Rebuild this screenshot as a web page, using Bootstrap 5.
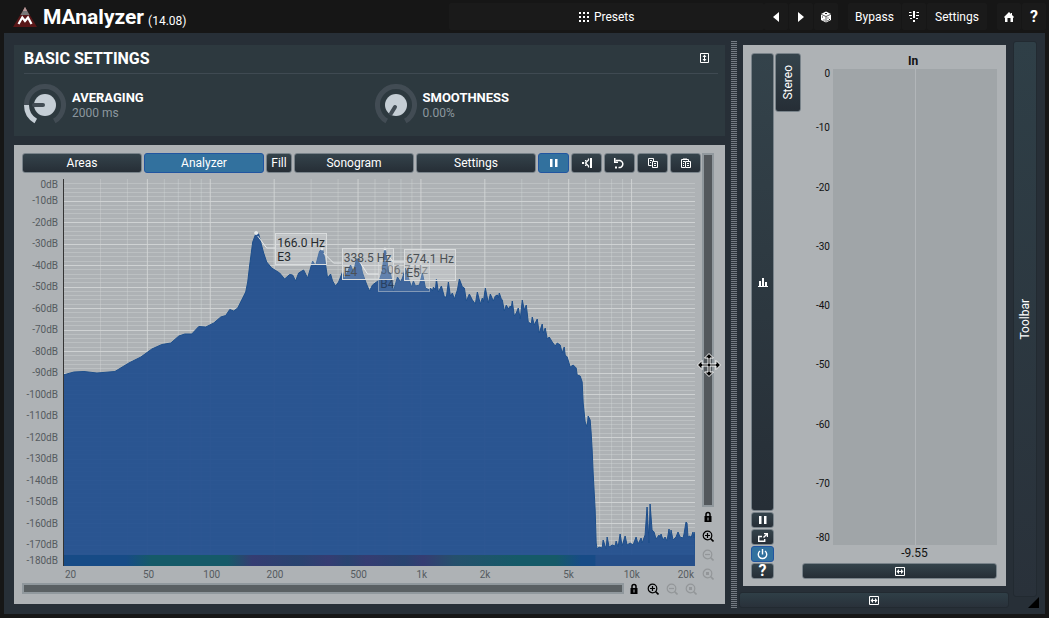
<!DOCTYPE html>
<html lang="en">
<head>
<meta charset="utf-8">
<meta name="viewport" content="width=device-width, initial-scale=1">
<title>MAnalyzer</title>
<link href="https://cdn.jsdelivr.net/npm/bootstrap@5.3.0/dist/css/bootstrap.min.css" rel="stylesheet">
<style>
  body { background:#161616; color:#fff; font-family:Roboto,"Liberation Sans",sans-serif; font-size:12px; line-height:16px; }
  button { font:inherit; color:inherit; border:0; padding:0; }
  svg { display:block; flex:none; }
  h1 { font-size:21px; line-height:32px; font-weight:700; margin-left:6px; }
  h2 { font-size:16px; line-height:20px; font-weight:700; }
  .topbar { height:33px; padding-right:3px; }
  .topbar button { background:#1a1a1a; height:27px; border-radius:2px; min-width:24px; display:flex; align-items:center; justify-content:center; }
  .btngroup { gap:1px; }
  .btngroup + .btngroup { margin-left:10px; }
  .version { font-size:12px; }
  .brandside { flex:444 1 0; padding-left:13px; }
  .presets { flex:320 1 0; gap:5px; }
  .w-bypass { width:53px; } .w-settings { width:60px; }
  .shell { background:#272f37; margin:0 4px 4px; padding:8px 0 6px 10px; }
  .leftside { min-width:0; padding:4px 0; gap:9px; }
  .basic { background:#2d393f; height:91px; padding:4px 0 0 10px; }
  .basic header { height:25px; border-bottom:1px solid #3f4a52; margin-right:7px; padding-right:9px; }
  .knobs { padding-top:10px; }
  .knob { padding-top:6px; padding-left:6px; }
  .knobname { font-size:13px; font-weight:700; line-height:16px; }
  .knobvalue { color:#8c979e; line-height:15px; }
  .splitter { width:6px; margin:0 2px 0 6px; background:repeating-linear-gradient(#747b83 0 1px,#2d343c 1px 2px); }
  .silver { background:#aeb2b5; color:#111; }
  .analyzer { padding:8px 10px 10px 8px; }
  .keys { gap:2px; margin-bottom:6px; }
  .key { background:linear-gradient(#34434b,#262e36); color:#fff; border:1px solid #79838a; border-radius:3px; height:20px; display:flex; align-items:center; justify-content:center; min-width:0; }
  .key.on { background:#32719e; border:1px solid #2155a0; }
  .key.wide { flex:1 1 0; }
  .key.fill { width:26px; }
  .key.tool { width:31px; }
  .yaxis { width:41px; padding-right:5px; color:#555b60; font-size:10px; line-height:11px; text-align:right; }
  .yaxis div { flex:2 1 0; min-height:0; display:flex; align-items:center; justify-content:flex-end; }
  .yaxis div:first-child, .yaxis div:last-child { flex-grow:1; }
  .plot { min-width:0; min-height:300px; margin-right:6px; position:relative; }
  .plot > svg { position:absolute; inset:0; width:100%; height:100%; }
  .xaxis { margin-left:41px; margin-right:6px; height:17px; font-size:10px; line-height:17px; color:#555b60; }
  .xaxis span { flex-basis:0; display:flex; justify-content:flex-end; }
  .xaxis b { width:0; display:flex; justify-content:center; font-weight:400; }
  .xaxis .edge-start b { justify-content:flex-start; padding-left:2px; }
  .xaxis .edge-end b { justify-content:flex-end; padding-right:1px; }
  .peak { position:absolute; width:8.2%; min-width:51px; height:32px; padding:2px 0 0 1px; border:1px solid #d9dcdd; background:#ffffff30; color:#252a2e; font-size:12px; line-height:14px; white-space:nowrap; }
  .peak.dim { color:#4b5054; } .peak.faint { opacity:.5; }
  .track { background:#90989d; }
  .hscroll { height:11px; padding:2px; }
  .hscroll div { height:7px; background:#5a6063; }
  .hicons { width:77px; height:11px; }
  .vside { width:12px; margin:0 1px 11px; }
  .vscroll { padding:2px; position:relative; }
  .vscroll > div { background:#53585c; height:100%; }
  .cursor { position:absolute; left:60%; top:60%; transform:translate(-50%,-50%); }
  .vicon { height:19px; display:flex; align-items:center; justify-content:center; }
  .off { opacity:.15; }
  .rightside { width:270px; padding-top:4px; gap:6px; }
  .meter { padding:8px 9px 7px 8px; margin:0 3px 0 4px; }
  .strip { width:23px; gap:1px; }
  .strip .key, .key.meterwide { height:16px; }
  .strip .key.tall { flex:1 1 auto; }
  .vtext { writing-mode:vertical-rl; transform:rotate(180deg); }
  .stereo { width:26px; height:59px; margin-left:1px; }
  .scale { width:32px; padding-right:3px; font-size:10px; line-height:10px; text-align:right; }
  .scale div { flex:2 1 0; display:flex; align-items:center; justify-content:flex-end; }
  .scale div:first-child { flex-grow:1; align-items:flex-start; }
  .scale div:last-child { flex-grow:1; align-items:flex-end; padding-bottom:2px; }
  .meterbody { background:#a0a5a8; }
  .meterbody div + div { border-left:1px solid #b2b6b9; }
  .meterhead, .meterwide { margin-left:28px; }
  .meterfoot { margin-left:58px; padding-bottom:2px; }
  .dark { background:linear-gradient(#2f3f47,#29313a); border:1px solid #222a31; border-radius:3px; }
  .widebar { height:16px; display:flex; align-items:center; justify-content:center; }
  .toolcol { width:32px; margin-left:4px; }
  .toolcol .dark { width:24px; display:flex; align-items:center; justify-content:center; }
  .corner { width:11px; height:11px; margin-right:6px; background:#000; clip-path:polygon(100% 0,100% 100%,0 100%); }
</style>
</head>
<body>
<svg width="0" height="0" class="position-absolute" aria-hidden="true">
  <defs>
    <symbol id="lock" viewBox="0 0 12 12"><path d="M4 6V3.500a2 2 0 0 1 4 0V6" fill="none" stroke="#000" stroke-width="1.500"/><path d="M2.500 5h7v6h-7z"/><path d="M6 6.500v3" stroke="#aeb2b5"/></symbol>
    <symbol id="lens" viewBox="0 0 12 12"><circle cx="5.500" cy="5.500" r="4.300" fill="none" stroke="#000" stroke-width="1.200"/><path d="M8.500 8.500 11.500 11.500" stroke="#000" stroke-width="1.600"/></symbol>
    <symbol id="zin" viewBox="0 0 12 12"><use href="#lens"/><path d="M3 5.500h5M5.500 3v5" stroke="#000" stroke-width="1.200"/></symbol>
    <symbol id="zout" viewBox="0 0 12 12"><use href="#lens"/><path d="M3 5.500h5" stroke="#000" stroke-width="1.200"/></symbol>
    <symbol id="zfit" viewBox="0 0 12 12"><use href="#lens"/><path d="M4 4h3v3H4z"/></symbol>
    <symbol id="pause" viewBox="0 0 10 10"><path d="M1 1h2.500v8H1zM6 1h2.500v8H6z" fill="#fff"/></symbol>
    <symbol id="widen" viewBox="0 0 10 9"><path d="M.5.5h9v8h-9z" fill="none" stroke="#fff"/><path d="M1.500 4.500 4 2V4h2V2l2.500 2.500L6 7V5H4v2z" fill="#fff"/></symbol>
  </defs>
</svg>
<div class="min-vh-100 d-flex flex-column">
  <header class="topbar d-flex align-items-center">
    <div class="brandside d-flex align-items-center">
      <svg width="24" height="20" viewBox="0 0 24 20"><path d="M12 0 24 20H0z" fill="#591718"/><path d="M12 0 16.500 8h-9z" fill="#777"/><path d="M12 0 14 4h-4z" fill="#b99"/><path d="M5.500 17 9.300 10.500 12 14l3-3.500 3.500 6.500" fill="none" stroke="#fff" stroke-width="2.200"/></svg>
      <h1 class="mb-0">MAnalyzer</h1><span class="version ms-1 mt-2">(14.08)</span>
    </div>
    <button class="presets" type="button"><svg width="10" height="10" fill="#fff"><path d="M0 0h2v2H0zM4 0h2v2H4zM8 0h2v2H8zM0 4h2v2H0zM4 4h2v2H4zM8 4h2v2H8zM0 8h2v2H0zM4 8h2v2H4zM8 8h2v2H8z"/></svg>Presets</button>
    <div class="btngroup d-flex">
      <button type="button" aria-label="Previous"><svg width="6" height="10"><path d="M6 0v10L0 5z" fill="#fff"/></svg></button>
      <button type="button" aria-label="Next"><svg width="6" height="10"><path d="M0 0v10l6-5z" fill="#fff"/></svg></button>
      <button type="button" aria-label="Random"><svg width="12" height="12" viewBox="0 0 12 12"><path d="M6 .5 11 3v6L6 11.500 1 9V3z" fill="#fff"/><path d="M1 3.200 6 5.500l5-2.300M6 5.500v6" fill="none" stroke="#333" stroke-width=".8"/><path d="M5 2.500h2M2.500 5.500v1M4 8.500v1M8 6.500v1M9.500 8v1M8 9v1" stroke="#222"/></svg></button>
    </div>
    <div class="btngroup d-flex">
      <button class="w-bypass" type="button">Bypass</button>
      <button type="button" aria-label="Panic"><svg width="10" height="11" stroke="#fff" fill="none"><path d="M5 0v7M5 9v2" stroke-width="2"/><path d="M0 4.500h3M7 4.500h3M0 1.500h2.500M7.500 1.500H10M1 7.500h2M7 7.500h2"/></svg></button>
      <button class="w-settings" type="button">Settings</button>
    </div>
    <div class="btngroup d-flex">
      <button type="button" aria-label="Home"><svg width="10" height="10"><path d="M5 0 7 2V1h1v2l2 2-1 1v4H6.500V6h-3v4H1V6L0 5z" fill="#fff"/></svg></button>
      <button type="button" class="fw-bold fs-6">?</button>
    </div>
  </header>

  <main class="shell d-flex flex-grow-1">
    <div class="leftside d-flex flex-column flex-grow-1">
      <section class="basic">
        <header class="d-flex justify-content-between align-items-start"><h2 class="mb-0">BASIC SETTINGS</h2>
          <button type="button" class="bg-transparent mt-1" aria-label="Collapse"><svg width="9" height="10"><path d="M.5.5h8v9h-8z" fill="none" stroke="#fff"/><path d="m4.500 1.500 2 2.500H5v2h1.500l-2 2.500-2-2.500H4V4H2.500z" fill="#fff"/></svg></button></header>
        <div class="knobs row gx-0">
          <div class="col-6 d-flex">
            <svg width="42" height="42" viewBox="-21 -21 42 42"><path d="M-9.250 16A18.500 18.500 0 1 1 9.250 16" fill="none" stroke="#424c54" stroke-width="5"/><path d="M-9.250 16A18.500 18.500 0 0 1-18.500 0" fill="none" stroke="#c5ced5" stroke-width="5"/><circle r="11" fill="#c5ced5"/><path d="M-11 0H-2" stroke="#424c54" stroke-width="4" stroke-linecap="round"/></svg>
            <div class="knob"><div class="knobname">AVERAGING</div><div class="knobvalue">2000 ms</div></div>
          </div>
          <div class="col-6 d-flex">
            <svg width="42" height="42" viewBox="-21 -21 42 42"><path d="M-9.250 16A18.500 18.500 0 1 1 9.250 16" fill="none" stroke="#424c54" stroke-width="5"/><circle r="11" fill="#c5ced5"/><path d="M-5 8.500-1 2" stroke="#424c54" stroke-width="4" stroke-linecap="round"/></svg>
            <div class="knob"><div class="knobname">SMOOTHNESS</div><div class="knobvalue">0.00%</div></div>
          </div>
        </div>
      </section>

      <section class="silver analyzer d-flex flex-grow-1">
        <div class="d-flex flex-column flex-grow-1">
          <div class="keys d-flex">
            <button class="key wide" type="button">Areas</button>
            <button class="key wide on" type="button">Analyzer</button>
            <button class="key fill" type="button">Fill</button>
            <button class="key wide" type="button">Sonogram</button>
            <button class="key wide" type="button">Settings</button>
            <button class="key tool on" type="button" aria-label="Pause"><svg width="10" height="10"><use href="#pause"/></svg></button>
            <button class="key tool" type="button" aria-label="Normalize"><svg width="10" height="10"><path d="M8 0h2v10H8z" fill="#fff"/><path d="M6.500.5v1.500L3.500 5l3 3v1.500" fill="none" stroke="#fff" stroke-width="1.300"/><path d="M0 4h2v2H0zM3 2h1.500v1.500H3zM3 6.500h1.500V8H3z" fill="#fff"/></svg></button>
            <button class="key tool" type="button" aria-label="Reset"><svg width="11" height="11"><path d="M1.500 2.500H6a3.500 3.500 0 1 1-1.500 7" fill="none" stroke="#fff" stroke-width="1.500"/><path d="M0 0h1.500v3.500H4V5H0zM1 8.500h2v2H1z" fill="#fff"/></svg></button>
            <button class="key tool" type="button" aria-label="Copy"><svg width="10" height="10" fill="none" stroke="#fff"><path d="M3.500 7.500h-3v-7h5v3M2 2.500h2M2 4.500h1M4.500 3.500h5v6h-5zM6 5.500h2M6 7.500h2"/></svg></button>
            <button class="key tool" type="button" aria-label="Paste"><svg width="10" height="10" fill="none" stroke="#fff"><path d="M4 9.500H.5v-8h7V3M2 1h4M2 3.500h2M2 5.500h1M2 7.500h1M4.500 3.500h5v6h-5zM6 5.500h2M6 7.500h2"/></svg></button>
          </div>
          <div class="d-flex flex-grow-1">
            <div class="yaxis d-flex flex-column" id="yaxis"></div>
            <div class="plot flex-grow-1">
              <svg viewBox="63 179 633 387" preserveAspectRatio="none">
                <defs><linearGradient id="sono"><stop offset="0" stop-color="#174b86"/><stop offset=".1" stop-color="#174b86"/><stop offset=".14" stop-color="#155a68"/><stop offset=".26" stop-color="#155a68"/><stop offset=".3" stop-color="#353c72"/><stop offset=".37" stop-color="#28436f"/><stop offset=".42" stop-color="#353c72"/><stop offset=".45" stop-color="#28436f"/><stop offset=".48" stop-color="#353c72"/><stop offset=".54" stop-color="#28436f"/><stop offset=".57" stop-color="#353c72"/><stop offset=".62" stop-color="#25506c"/><stop offset=".72" stop-color="#155a68"/><stop offset=".78" stop-color="#155a68"/><stop offset=".82" stop-color="#174b86"/><stop offset=".842" stop-color="#174b86"/><stop offset=".843" stop-color="#264f8a"/><stop offset="1" stop-color="#264f8a"/></linearGradient></defs>
                <g id="grid" stroke="#d5d8d8"></g>
                <path id="spectrum" fill="#224f8e" fill-opacity=".94" stroke="#1d4e8b" stroke-width="1" d="M63 567V375L74 372 84 371.500 97 373 115 371.500 129 363 141 357 152 349 162 344.500 171 343 179 336 185 334 192 334 199 326.500 206 327 214 323 221 317 226 315.500 230 309.500 234 311 238 308 242 300 246 292 248 282 250 265 253 242 256 234 259 234 261 242 264 253 267 262 272 268 280 273 285 279 290 274.500 293 275 296 281 299 273 304 270 308 278 313 261 316 266 320 251 323 249 325 258 328 278 331 274 333 281 336 286 339 282 343 272 345 279 351 265 354 272 357 259 360 259 363 273 367 284 370 291 373 285 377 282 380 280 383 270 385 250 386 250 387 257 389 272 391 273 394 291 398 277 401 282 403 278 406 268 409 278 412 287 414 281 416 286 420 285 423 273 426 288 430 290 431 288 433 291 434 287 436 290 437 279 439 292 442 286 445 297 447 297 449 282 451 296 453 293 455 299 458 290 460 279 463 287 465 288 467 301 470 294 473 300 476 304 478 292 481 304 483 298 484 302 486 288 489 303 491 294 494 301 496 296 498 295 499 298 500 293 502 299 503 300 505 311 507 305 509 309 511 306 512 308 513 301 515 316 517 313 519 308 521 319 523 300 525 310 527 305 529 322 532 324 533 317 535 325 538 319 540 333 543 324 544 333 546 328 548 339 550 337 553 342 556 346 558 343 561 345 563 353 565 347 566 355 568 357 571 367 574 365 577 368 578 375 581 376 583 382 584 403 586 422 588 427 589 416 591 420 592 433 593 450 594 473 596 510 597 543 598 549 600 547 603 548 604 540 607 549 608 537 610 547 613 545 616 546 617 541 619 547 621 534 623 546 626 536 628 545 631 543 634 545 637 537 639 544 642 538 643 543 646 535 648 507 650 543 651 504 653 530 655 532 657 539 660 535 661 538 662 534 664 540 666 537 668 541 670 529 671 539 672 530 674 540 677 537 679 532 681 537 684 538 685 534 687 522 688 523 689 537 691 536 692 538 694 532 695 538 696 532V567z"/>
                <rect x="63" y="555" width="633" height="11" fill="url(#sono)"/>
                <path d="M63.500 179V566" stroke="#333"/>
                <g fill="none" stroke="#e6e9ea" stroke-width="1"><path d="M258 236 267 248H276M324 253 334 263H342M359 260 368 274H379M387 254 394 262H405"/><g fill="#e6e9ea"><circle cx="256.500" cy="233" r="1.500"/><circle cx="322.500" cy="249" r="1"/><circle cx="385.500" cy="249" r="1"/></g></g>
              </svg>
              <div class="peak faint" style="left:49.9%;top:20.9%">506.7 Hz<br>B4</div>
              <div class="peak dim" style="left:54%;top:18.1%">674.1 Hz<br>E5</div>
              <div class="peak dim" style="left:44.1%;top:17.8%">338.5 Hz<br>E4</div>
              <div class="peak" style="left:33.6%;top:14%">166.0 Hz<br>E3</div>
            </div>
          </div>
          <div class="xaxis d-flex" id="xaxis"></div>
          <div class="d-flex">
            <div class="track hscroll flex-grow-1"><div></div></div>
            <div class="hicons d-flex align-items-center justify-content-around">
              <svg width="12" height="12"><use href="#lock"/></svg><svg width="12" height="12"><use href="#zin"/></svg><svg class="off" width="12" height="12"><use href="#zout"/></svg><svg class="off" width="12" height="12"><use href="#zfit"/></svg>
            </div>
          </div>
        </div>
        <div class="vside d-flex flex-column">
          <div class="track vscroll flex-grow-1"><div></div>
            <svg class="cursor" width="24" height="24" viewBox="-12 -12 24 24"><path d="M0-11.500 4.500-7H1v6h6v-3.500L11.500 0 7 4.500V1H1v6h3.500L0 11.500-4.500 7H-1V1h-6v3.500L-11.500 0-7-4.500V-1h6v-6h-3.500z" fill="#000" stroke="#fff"/></svg>
          </div>
          <div class="vicon"><svg width="12" height="12"><use href="#lock"/></svg></div>
          <div class="vicon"><svg width="12" height="12"><use href="#zin"/></svg></div>
          <div class="vicon off"><svg width="12" height="12"><use href="#zout"/></svg></div>
          <div class="vicon off"><svg width="12" height="12"><use href="#zfit"/></svg></div>
        </div>
      </section>
    </div>

    <div class="splitter"></div>

    <div class="rightside d-flex flex-column flex-shrink-0">
      <section class="silver meter d-flex flex-grow-1">
        <div class="strip d-flex flex-column">
          <button class="key tall" type="button" aria-label="Meter view"><svg width="10" height="9"><path d="M0 8h10v1H0zM1 3h2v5H1zM4 0h2v8H4zM7 4h2v4H7z" fill="#fff"/></svg></button>
          <button class="key" type="button" aria-label="Pause"><svg width="10" height="10"><use href="#pause"/></svg></button>
          <button class="key" type="button" aria-label="Pop up"><svg width="10" height="9"><path d="M4 3.500H.7v4.800h6V6" fill="none" stroke="#fff" stroke-width="1.400"/><path d="M6 0h4v4H8.800V2.200L6 5 5 4l2.800-2.800H6z" fill="#fff"/></svg></button>
          <button class="key on" type="button" aria-label="Enable"><svg width="11" height="11"><path d="M3 2a4.200 4.200 0 1 0 5 0M5.500 0v5.500" fill="none" stroke="#fff" stroke-width="1.400"/></svg></button>
          <button class="key fw-bold fs-6" type="button">?</button>
        </div>
        <div class="d-flex flex-column flex-grow-1">
          <div class="d-flex flex-grow-1">
            <button class="key stereo" type="button"><span class="vtext">Stereo</span></button>
            <div class="d-flex flex-column flex-grow-1">
              <div class="meterhead text-center fw-bold">In</div>
              <div class="d-flex flex-grow-1">
                <div class="scale d-flex flex-column"><div>0</div><div>-10</div><div>-20</div><div>-30</div><div>-40</div><div>-50</div><div>-60</div><div>-70</div><div>-80</div></div>
                <div class="meterbody d-flex flex-grow-1"><div class="w-50"></div><div class="w-50"></div></div>
              </div>
            </div>
          </div>
          <div class="meterfoot text-center">-9.55</div>
          <button class="key meterwide" type="button" aria-label="Widen meter"><svg width="10" height="9"><use href="#widen"/></svg></button>
        </div>
      </section>
      <button class="dark widebar" type="button" aria-label="Widen panel"><svg width="10" height="9"><use href="#widen"/></svg></button>
    </div>
    <div class="toolcol d-flex flex-column">
      <button class="dark flex-grow-1" type="button"><span class="vtext">Toolbar</span></button>
      <div class="corner align-self-end"></div>
    </div>
  </main>
</div>
<script src="https://cdn.jsdelivr.net/npm/bootstrap@5.3.0/dist/js/bootstrap.bundle.min.js"></script>
<script>
  // Level axis: 0 to -180 dB, end labels take half a step
  var y = '';
  for (var d = 0; d <= 180; d += 10) y += '<div>' + (d ? '-' : '') + d + 'dB</div>';
  document.getElementById('yaxis').innerHTML = y;

  // Frequency axis: logarithmic, 20 Hz to 20 kHz
  var ticks = [20, 50, 100, 200, 500, 1000, 2000, 5000, 10000, 20000], x = '';
  ticks.forEach(function (f, i) {
    var grow = i ? Math.log10(f / ticks[i - 1]) : 0;
    var edge = i === 0 ? 'edge-start' : i === ticks.length - 1 ? 'edge-end' : '';
    x += '<span class="' + edge + '" style="flex-grow:' + grow + '"><b>' + (f < 1000 ? f : f / 1000 + 'k') + '</b></span>';
  });
  document.getElementById('xaxis').innerHTML = x;

  // Grid lines behind the spectrum
  var g = '', k, f, p;
  for (k = 1; k < 90; k++) {
    p = Math.round(179 + k * 4.3) + 0.5;
    g += '<path d="M63 ' + p + 'H696" stroke-opacity="' + (k % 5 ? 0.38 : 0.85) + '"/>';
  }
  for (k = 10; k <= 10000; k *= 10) for (f = k; f < k * 10; f += k) {
    if (f <= 20 || f >= 20000) continue;
    p = Math.round(63 + 211 * Math.log10(f / 20)) + 0.5;
    g += '<path d="M' + p + ' 179V566" stroke-opacity="' + (ticks.indexOf(f) < 0 ? 0.4 : 0.85) + '"/>';
  }
  document.getElementById('grid').innerHTML = g;
</script>
</body>
</html>
